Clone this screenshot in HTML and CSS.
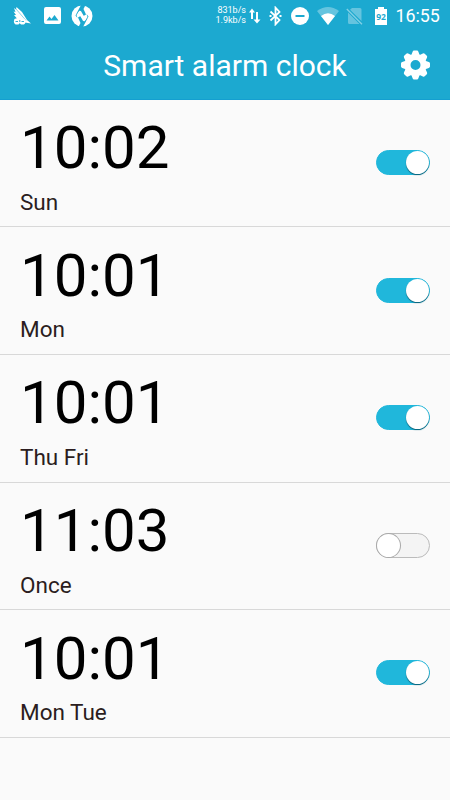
FILE: index.html
```html
<!DOCTYPE html>
<html lang="en">
<head>
<meta charset="utf-8">
<title>Smart alarm clock</title>
<link rel="stylesheet" href="styles.css">
</head>
<body>
<div class="status">
  <svg class="s-bird" width="20" height="20" viewBox="0 0 20 20"><path d="M2 2 4 3.500 4.500 1 10 6 15 14 19 17.500 13 16.500H6L2 13 5 12.500 2 9 4 9 1.500 5.500 3.500 6z" fill="#fff"/><path d="M4 3 14 14.500" stroke="#1ca9d0" stroke-width=".5"/><circle cx="5" cy="15.500" r="3.100" fill="#fff"/><circle cx="10.500" cy="15.500" r="3.100" fill="#fff"/><path d="M3.500 15.500h2.500M9.500 15.500h2.500M7.800 14v2" stroke="#1ca9d0" stroke-width=".9"/></svg>
  <svg class="s-image" width="17" height="17" viewBox="0 0 17 17"><path fill="#fff" fill-rule="evenodd" d="M2 0h13a2 2 0 0 1 2 2v13a2 2 0 0 1-2 2H2a2 2 0 0 1-2-2V2a2 2 0 0 1 2-2zm.5 13.500h12l-4-5.500-3 4-2-2.500z"/></svg>
  <svg class="s-twrp" width="22" height="22" viewBox="0 0 22 22"><circle cx="11" cy="11" r="10.500" fill="#fff"/><path d="M10 0h4.500L12.500 4 15 9.500 12.500 11 8.500 5.500 5.500 10 6.500 13 4.500 10.500zM12 22H7.500L9.500 18 7 12.500 9.500 11l4 5.500 3-4.500-1-3 2 2.500z" fill="#1ca9d0"/><path d="M8.500 6.500 13.500 15.500" stroke="#fff" stroke-width="3"/></svg>
  <div class="rate"><span>831b/s</span><span>1.9kb/s</span></div>
  <svg class="s-arrows" width="12" height="16" viewBox="0 0 12 16"><path d="M3 11V3M8 4v9" stroke="#fff" stroke-width="2"/><path d="M0 4.500 3 .5 6 4.500zM4.500 11.500h7L8 15.500z" fill="#fff"/></svg>
  <svg class="s-bt" width="13" height="20" viewBox="0 0 13 20"><path d="M1.500 5.500 10.500 14 6.500 18.300V1.700l4 4.300-9 8.500" fill="none" stroke="#fff" stroke-width="1.800"/><path d="M.5 9h2v2h-2zM10.500 9h2v2h-2z" fill="#fff"/></svg>
  <svg class="s-dnd" width="18" height="18" viewBox="0 0 18 18"><circle cx="9" cy="9" r="9" fill="#fff"/><path d="M4.500 9h9" stroke="#1ca9d0" stroke-width="2"/></svg>
  <svg class="s-wifi" width="22" height="18" viewBox="0 0 22 18"><path d="M0 4Q11-4 22 4L11 18z" fill="#fff" opacity=".32"/><path d="M4 9Q11 3.500 18 9l-7 9z" fill="#fff"/></svg>
  <svg class="s-sim" width="17" height="18" viewBox="0 0 17 18"><path d="M6 1h8a1.500 1.500 0 0 1 1.500 1.500V14L4 2.800zM2 5.500 13.500 17H3.500A1.500 1.500 0 0 1 2 15.500z" fill="#fff" opacity=".32"/><path d="M.8 2 16 17.200" stroke="#fff" opacity=".45" stroke-width="1.300"/></svg>
  <div class="battery">92</div>
  <div class="clock">16:55</div>
</div>
<header class="header">
  <h1>Smart alarm clock</h1>
  <svg class="gear" width="30" height="30" viewBox="-15.500 -15 30 30"><defs><path id="tooth" d="M-4.500-9-2.900-13.300Q-2.500-14.500-1.500-14.500H1.500Q2.500-14.500 2.900-13.300L4.500-9z"/></defs><g fill="#fff"><circle r="8" fill="none" stroke="#fff" stroke-width="6"/><use href="#tooth"/><use href="#tooth" transform="rotate(45)"/><use href="#tooth" transform="rotate(90)"/><use href="#tooth" transform="rotate(135)"/><use href="#tooth" transform="rotate(180)"/><use href="#tooth" transform="rotate(225)"/><use href="#tooth" transform="rotate(270)"/><use href="#tooth" transform="rotate(315)"/></g></svg>
</header>
<main>
  <section class="alarm"><div><div class="time">10:02</div><div class="days">Sun</div></div><div class="switch on"><i></i></div></section>
  <section class="alarm"><div><div class="time">10:01</div><div class="days">Mon</div></div><div class="switch on"><i></i></div></section>
  <section class="alarm"><div><div class="time">10:01</div><div class="days">Thu Fri</div></div><div class="switch on"><i></i></div></section>
  <section class="alarm"><div><div class="time">11:03</div><div class="days">Once</div></div><div class="switch"><i></i></div></section>
  <section class="alarm"><div><div class="time">10:01</div><div class="days">Mon Tue</div></div><div class="switch on"><i></i></div></section>
</main>
</body>
</html>
```
FILE: styles.css
```css
* { box-sizing: border-box; }
body {
  margin: 0;
  height: 800px;
  overflow: hidden;
  background: #fafafa;
  font-family: Roboto, sans-serif;
}
svg { display: block; flex: none; }
.status {
  display: flex;
  align-items: center;
  height: 31px;
  padding-left: 12px;
  background: #1ca9d0;
  color: #fff;
}
.s-image { margin-left: 12px; }
.s-twrp { margin-left: 10px; }
.rate {
  display: flex;
  flex-direction: column;
  align-items: flex-end;
  width: 153px;
  font-size: 9px;
  line-height: 9.5px;
}
.s-arrows { margin-left: 3px; }
.s-bt { margin-left: 8px; }
.s-dnd { margin-left: 9px; }
.s-wifi { margin-left: 8px; }
.s-sim { margin-left: 7px; }
.battery {
  width: 12px;
  height: 18px;
  margin-left: 12px;
  background: linear-gradient(#fff, #fff) 50% 0 / 6px 2px no-repeat, linear-gradient(#fff, #fff) 0 2px / 12px 16px no-repeat;
  color: #1ca9d0;
  font-family: "Open Sans", sans-serif;
  font-size: 8.5px;
  font-weight: 700;
  line-height: 20px;
  text-align: center;
}
.clock {
  margin-left: 8.5px;
  font-size: 17.8px;
  line-height: 20px;
}
.header {
  display: grid;
  grid-template-columns: 1fr auto 1fr;
  align-items: center;
  height: 69px;
  padding-right: 20px;
  padding-left: 20px;
  background: #1ca9d0;
  border-bottom: 1px solid #149fd0;
  color: #fff;
}
h1 {
  grid-column: 2;
  margin: 2px 0 0;
  font-size: 30px;
  font-weight: 400;
  line-height: 36px;
}
.gear { justify-self: end; }
main { margin-top: -.15px; }
.alarm {
  display: flex;
  align-items: flex-start;
  justify-content: space-between;
  height: 127.6px;
  padding: 13.3px 20px 0;
  border-bottom: 1px solid #d8d8d8;
}
.time {
  color: #000;
  font-size: 60px;
  line-height: 70px;
}
.days {
  margin-top: 4.7px;
  color: #2b1d20;
  font-size: 22.5px;
  line-height: 28px;
}
.switch {
  display: flex;
  width: 54px;
  height: 25px;
  margin-top: 36.8px;
  background: #f4f4f4;
  border: 1px solid #bbb;
  border-radius: 13px;
}
.switch i {
  width: 23px;
  height: 23px;
  background: #fff;
  border-radius: 50%;
  box-shadow: 0 0 0 1px #aaa;
}
.switch.on {
  justify-content: flex-end;
  background: #20b7db;
  border-color: #20b7db;
}
.switch.on i {
  box-shadow: 0 1px 1px #086078;
}
```
